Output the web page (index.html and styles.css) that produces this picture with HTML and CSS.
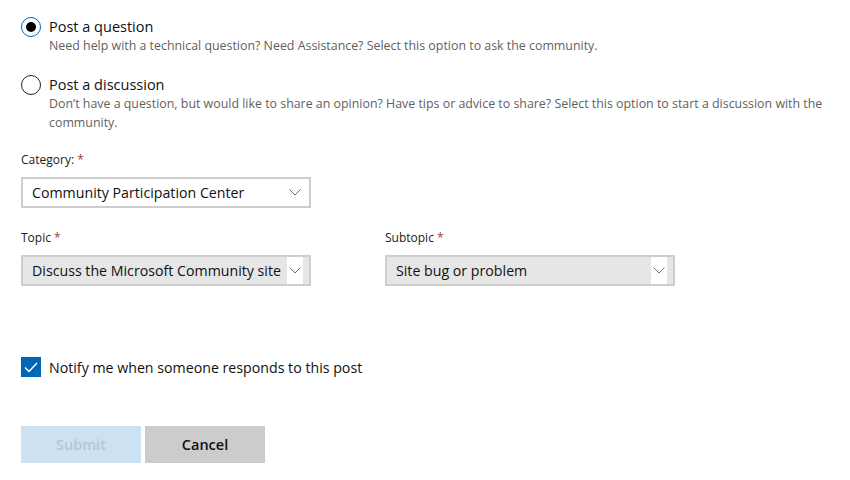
FILE: index.html
```html
<!DOCTYPE html>
<html>
<head>
<meta charset="utf-8">
<link rel="stylesheet" href="styles.css">
</head>
<body>
<form class="form">
  <div class="option">
    <span class="radio checked"><span class="dot"></span></span>
    <div class="opt-text">
      <div class="opt-title">Post a question</div>
      <div class="opt-desc">Need help with a technical question? Need Assistance? Select this option to ask the community.</div>
    </div>
  </div>
  <div class="option second">
    <span class="radio"></span>
    <div class="opt-text">
      <div class="opt-title">Post a discussion</div>
      <div class="opt-desc">Don’t have a question, but would like to share an opinion? Have tips or advice to share? Select this option to start a discussion with the community.</div>
    </div>
  </div>

  <div class="field cat">
    <div class="label">Category: <span class="req">*</span></div>
    <div class="select white">
      <span class="value">Community Participation Center</span>
      <span class="chev"><svg width="12" height="7" viewBox="0 0 12 7"><path d="M0.5 0.5 L6 6 L11.5 0.5" fill="none" stroke="#666" stroke-width="1"/></svg></span>
    </div>
  </div>

  <div class="row">
    <div class="field">
      <div class="label">Topic <span class="req">*</span></div>
      <div class="select grey">
        <span class="value">Discuss the Microsoft Community site</span>
        <span class="chev box"><svg width="12" height="7" viewBox="0 0 12 7"><path d="M0.5 0.5 L6 6 L11.5 0.5" fill="none" stroke="#7a6a8a" stroke-width="1"/></svg></span>
      </div>
    </div>
    <div class="field">
      <div class="label">Subtopic <span class="req">*</span></div>
      <div class="select grey">
        <span class="value">Site bug or problem</span>
        <span class="chev box"><svg width="12" height="7" viewBox="0 0 12 7"><path d="M0.5 0.5 L6 6 L11.5 0.5" fill="none" stroke="#7a6a8a" stroke-width="1"/></svg></span>
      </div>
    </div>
  </div>

  <div class="notify">
    <span class="checkbox"><svg width="14" height="11" viewBox="0 0 14 11"><path d="M1 5.5 L5 9.5 L13 1" fill="none" stroke="#fff" stroke-width="1.5"/></svg></span>
    <span class="notify-text">Notify me when someone responds to this post</span>
  </div>

  <div class="buttons">
    <button type="button" class="btn submit">Submit</button>
    <button type="button" class="btn cancel">Cancel</button>
  </div>
</form>
</body>
</html>
```
FILE: styles.css
```css
* { box-sizing: border-box; }
body {
  margin: 0;
  background: #fff;
  font-family: "Open Sans", "Noto Sans", sans-serif;
  color: #000;
}
.form {
  padding: 17px 21px 0 21px;
  width: 850px;
}
.option {
  display: flex;
  align-items: flex-start;
}
.option.second { margin-top: 20px; }
.radio {
  width: 20px;
  height: 20px;
  border-radius: 50%;
  border: 1.5px solid #222;
  margin-top: 0;
  flex: none;
  display: flex;
  align-items: center;
  justify-content: center;
}
.radio.checked { border-color: #0067b8; }
.radio .dot {
  width: 10px;
  height: 10px;
  border-radius: 50%;
  background: #000;
}
.opt-text { margin-left: 8px; }
.opt-title {
  font-size: 14.5px;
  line-height: 20px;
  color: #111;
}
.opt-desc {
  font-size: 12.4px;
  line-height: 19px;
  color: #5f5f5f;
  margin-top: -1px;
}
.field.cat { margin-top: 20px; }
.label {
  font-size: 12px;
  line-height: 16px;
  color: #222;
  margin-bottom: 9px;
}
.req { color: #a4373a; }
.select {
  width: 290px;
  height: 31px;
  border: 2px solid #cdcdcd;
  display: flex;
  align-items: center;
  padding-left: 9px;
  position: relative;
}
.select.white { background: #fff; }
.select.grey { background: #e6e6e6; }
.value {
  font-size: 14.2px;
  color: #111;
  flex: 1;
  white-space: nowrap;
}
.chev {
  width: 16px;
  height: 27px;
  display: flex;
  align-items: center;
  justify-content: center;
  margin-right: 6px;
}
.chev.box { background: #fff; height: 27px; margin-right: 6px; }
.row {
  display: flex;
  gap: 74px;
  margin-top: 22px;
}
.notify {
  display: flex;
  align-items: center;
  margin-top: 71px;
}
.checkbox {
  width: 20px;
  height: 20px;
  background: #0067b8;
  display: flex;
  align-items: center;
  justify-content: center;
}
.notify-text {
  margin-left: 8px;
  font-size: 14.2px;
  color: #111;
}
.buttons {
  display: flex;
  gap: 4px;
  margin-top: 49px;
}
.btn {
  width: 120px;
  height: 37px;
  border: none;
  font-family: inherit;
  font-size: 14.5px;
  font-weight: 600;
}
.submit { background: #cce1f2; color: #b3c7d9; }
.cancel { background: #cccccc; color: #111; }
```
